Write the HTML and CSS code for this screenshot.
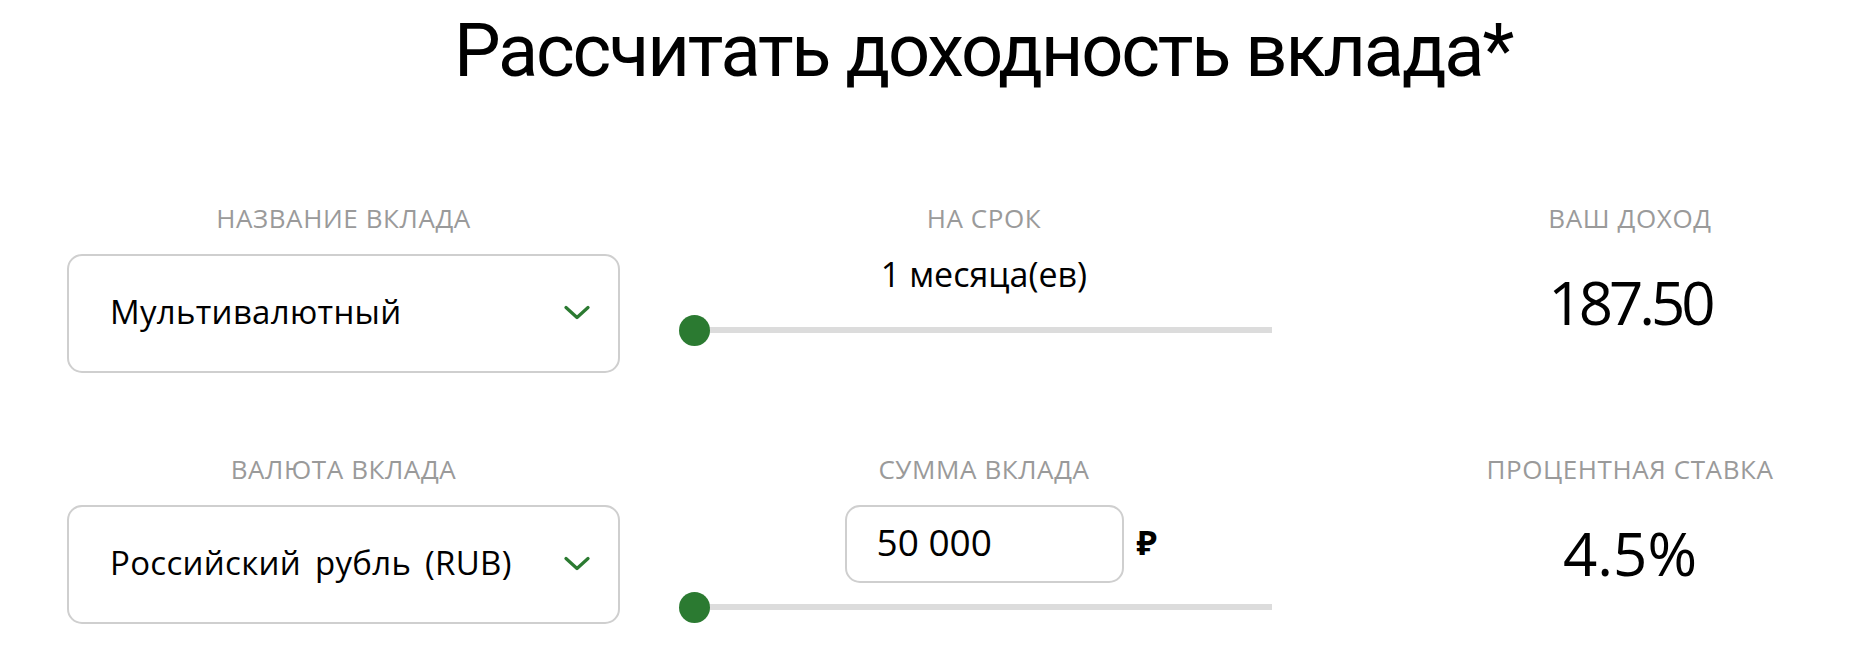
FILE: index.html
```html
<!DOCTYPE html>
<html lang="ru">
<head>
<meta charset="utf-8">
<title>Рассчитать доходность вклада</title>
<link rel="stylesheet" href="styles.css">
</head>
<body>
<div class="page">
  <h1 class="title">Рассчитать доходность вклада*</h1>
  <div class="calc">
    <div class="cell">
      <div class="label">Название вклада</div>
      <div class="select">
        <span class="select-text">Мультивалютный</span>
        <svg class="chevron" width="26" height="15" viewBox="0 0 26 15"><polyline points="2,2.5 13,12.5 24,2.5" fill="none" stroke="#2b7a31" stroke-width="3.2" stroke-linecap="round" stroke-linejoin="round"/></svg>
      </div>
    </div>
    <div class="cell">
      <div class="label">На срок</div>
      <div class="term">1 месяца(ев)</div>
      <div class="slider slider-term"><span class="thumb"></span><span class="track"></span></div>
    </div>
    <div class="cell">
      <div class="label">Ваш доход</div>
      <div class="value value-income">187.50</div>
    </div>

    <div class="cell">
      <div class="label">Валюта вклада</div>
      <div class="select">
        <span class="select-text">Российский рубль (RUB)</span>
        <svg class="chevron" width="26" height="15" viewBox="0 0 26 15"><polyline points="2,2.5 13,12.5 24,2.5" fill="none" stroke="#2b7a31" stroke-width="3.2" stroke-linecap="round" stroke-linejoin="round"/></svg>
      </div>
    </div>
    <div class="cell">
      <div class="label">Сумма вклада</div>
      <div class="amount">
        <div class="amount-input">50 000</div>
        <span class="currency">₽</span>
      </div>
      <div class="slider slider-amount"><span class="thumb"></span><span class="track"></span></div>
    </div>
    <div class="cell">
      <div class="label">Процентная ставка</div>
      <div class="value value-rate">4.5%</div>
    </div>
  </div>
</div>
</body>
</html>
```

FILE: styles.css
```css
html, body {
  margin: 0;
  padding: 0;
  background: #ffffff;
}
body {
  overflow: hidden;
  font-family: "Open Sans", "Noto Sans", sans-serif;
  color: #000;
}
.page {
  width: 1832px;
  margin-left: 67px;
}
.title {
  margin: 0;
  padding-top: 11px;
  font-family: Roboto, Inter, sans-serif;
  font-weight: 400;
  font-size: 74px;
  line-height: 80px;
  letter-spacing: -2.2px;
  text-align: center;
  color: #000;
}
.calc {
  margin-top: 112px;
  display: grid;
  grid-template-columns: 553px 610px 564px;
  column-gap: 59px;
  row-gap: 81px;
}
.cell {
  display: flex;
  flex-direction: column;
  align-items: center;
}
.label {
  font-size: 26px;
  line-height: 30px;
  text-transform: uppercase;
  color: #9a9a9a;
  letter-spacing: 0.6px;
  white-space: nowrap;
}
.select {
  margin-top: 21px;
  box-sizing: border-box;
  width: 553px;
  height: 119px;
  border: 2px solid #cfcfcf;
  border-radius: 15px;
  display: flex;
  align-items: center;
  justify-content: space-between;
  padding: 0 28px 4px 41px;
}
.select-text {
  font-size: 33px;
  line-height: 40px;
  letter-spacing: 0.3px;
  word-spacing: 5px;
  white-space: nowrap;
}
.chevron {
  display: block;
  flex: none;
  margin-top: 2px;
}
.term {
  margin-top: 21px;
  font-size: 34px;
  line-height: 40px;
  white-space: nowrap;
}
.slider {
  align-self: flex-start;
  width: 593px;
  height: 32px;
  display: flex;
  align-items: center;
}
.slider-term {
  margin-top: 20px;
}
.slider-amount {
  margin-top: 8px;
}
.thumb {
  flex: none;
  width: 31px;
  height: 31px;
  border-radius: 50%;
  background: #2b7a31;
  position: relative;
  z-index: 1;
}
.track {
  flex: 1;
  height: 6px;
  margin-left: -16px;
  background: #dcdcdc;
}
.amount {
  margin-top: 21px;
  position: relative;
}
.amount-input {
  box-sizing: border-box;
  width: 279px;
  height: 78px;
  border: 2px solid #cfcfcf;
  border-radius: 15px;
  padding-left: 30px;
  font-size: 37px;
  line-height: 70px;
}
.currency {
  position: absolute;
  left: calc(100% + 13px);
  top: 2px;
  font-size: 34px;
  font-weight: 700;
  line-height: 70px;
}
.value {
  margin-top: 34px;
  font-size: 60px;
  line-height: 70px;
  white-space: nowrap;
}
.value-income {
  letter-spacing: -4px;
}
```
